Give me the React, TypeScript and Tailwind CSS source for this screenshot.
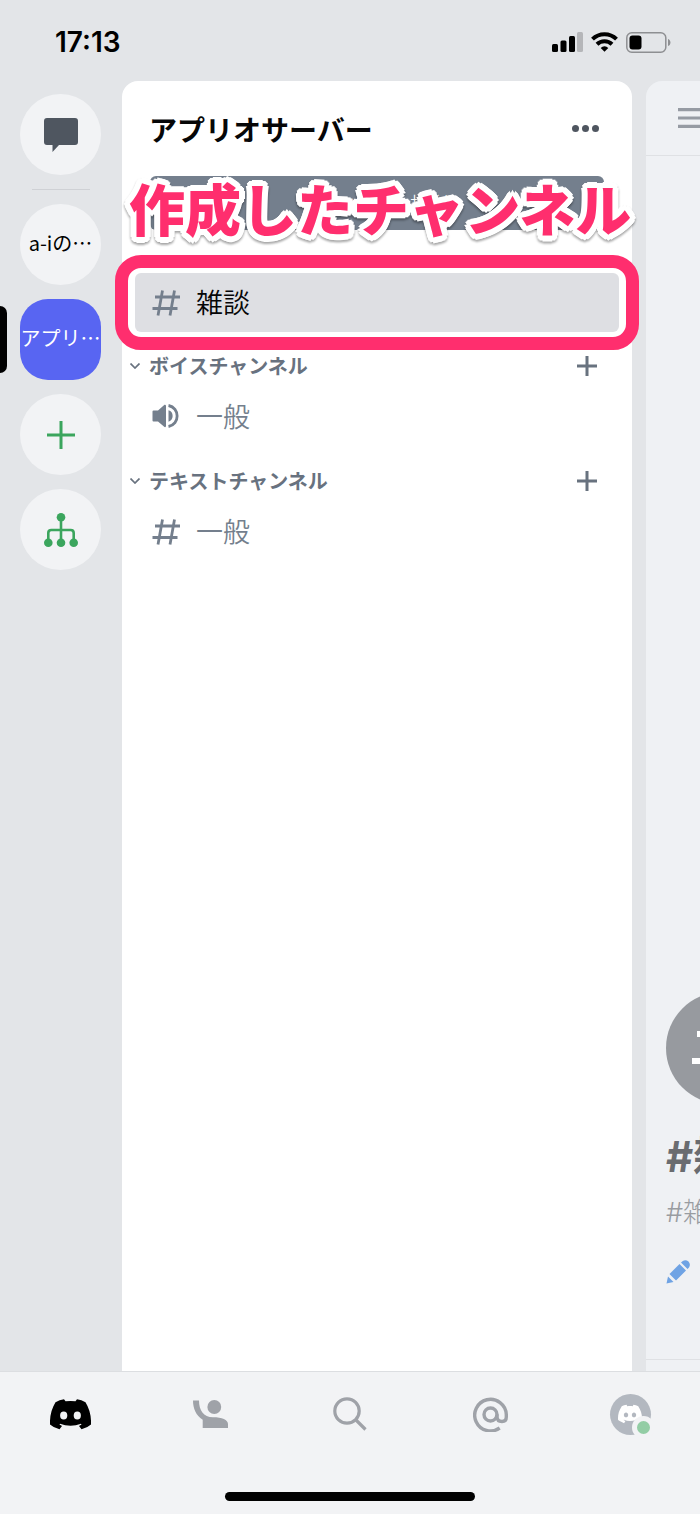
import type { ReactNode } from "react";
import { SiDiscord } from "react-icons/si";

function HashIcon({ className }: { className: string }) {
  return (
    <svg viewBox="0 0 28 26" fill="none" stroke="currentColor" strokeWidth="2.8" className={className} aria-hidden="true">
      <path d="M10.5 0.5 6 25.5M22.5 0.5 18 25.5M3 7H28M0.5 18.5H25.5" />
    </svg>
  );
}

function PlusIcon({ className }: { className: string }) {
  return (
    <svg viewBox="0 0 20 20" fill="none" stroke="currentColor" strokeWidth="3" className={className} aria-hidden="true">
      <path d="M10 0V20M0 10H20" />
    </svg>
  );
}

function SpeakerIcon({ className }: { className: string }) {
  return (
    <svg viewBox="0 0 28 26" fill="currentColor" className={className} aria-hidden="true">
      <path d="M12.500 0.800Q14 0.500 14 2V22Q14 23.500 12.500 23L6 17.500H1.500Q0.500 17.500 0.500 16.500V7.500Q0.500 6.500 1.500 6.500H6Z" />
      <path d="M16.500 6.300C22 7.500 22 16.500 16.500 17.700Z" />
      <path d="M16.500 1.500C28 3.500 28 20.500 16.500 22.500" fill="none" stroke="currentColor" strokeWidth="2.800" />
    </svg>
  );
}

function StatusBar() {
  return (
    <header className="flex h-[81px] items-start justify-between pl-[55px] pr-[29px] pt-[26px]">
      <time className="font-[Inter] text-[28px] font-semibold leading-8 text-black">17:13</time>
      <div className="flex h-8 items-center gap-[8px]">
        <svg viewBox="0 0 31 20" className="h-5 w-[31px]" aria-hidden="true">
          <rect x="0" y="12" width="6" height="8" rx="1.5" />
          <rect x="8.5" y="8.500" width="6" height="11.5" rx="1.5" />
          <rect x="17" y="4" width="6" height="16" rx="1.5" />
          <rect x="25" y="0" width="6" height="20" rx="1.5" fill="#b5b6b9" />
        </svg>
        <svg viewBox="0 0 27 20" className="h-5 w-[27px]" fill="none" stroke="#000" strokeWidth="4" aria-hidden="true">
          <path d="M1.500 7.200A17 17 0 0 1 25.500 7.200" />
          <path d="M6 12.200A10.700 10.700 0 0 1 21 12.200" />
          <path d="M9.700 15.900A5.400 5.400 0 0 1 17.300 15.900L13.500 19.800Z" fill="#000" stroke="none" />
        </svg>
        <svg viewBox="0 0 45 21" className="h-[21px] w-[45px]" aria-hidden="true">
          <rect x="0.800" y="0.800" width="39" height="19.400" rx="5" fill="none" stroke="#8e8f92" strokeWidth="1.500" />
          <rect x="3.500" y="3.500" width="12" height="14" rx="3" />
          <path d="M42 7c3.300 1 3.300 6 0 7z" fill="#8e8f92" />
        </svg>
      </div>
    </header>
  );
}

function ServerRail() {
  const bubble = "flex size-[81px] shrink-0 items-center justify-center overflow-hidden whitespace-nowrap";
  return (
    <nav aria-label="サーバー" className="flex w-[122px] shrink-0 flex-col items-center gap-[14px] pt-[13px] pr-px">
      <button aria-label="ダイレクトメッセージ" className={`${bubble} rounded-full bg-[#f2f3f5] text-[#4f5660]`}>
        <svg viewBox="0 0 34 34" className="size-[34px]" fill="currentColor" aria-hidden="true">
          <path d="M3 0H31Q34 0 34 3V24Q34 27 31 27H15L8.500 34V27H3Q0 27 0 24V3Q0 0 3 0Z" />
        </svg>
      </button>
      <hr className="w-[58px] border-t border-[#cfd1d5]" />
      <button className={`${bubble} rounded-full bg-[#f2f3f5] pb-1 text-[20px] text-black`}>a-iの⋯</button>
      <div className="relative flex w-full justify-center">
        <span className="absolute left-0 top-[7px] h-[67px] w-[7px] rounded-r-lg bg-black" />
        <button aria-current="true" className={`${bubble} rounded-[28px] bg-[#5865f2] pb-1 text-[20px] text-white`}>
          アプリ⋯
        </button>
      </div>
      <button aria-label="サーバーを追加" className={`${bubble} rounded-full bg-[#f2f3f5] text-[#3ba55d]`}>
        <svg viewBox="0 0 28 28" className="size-7" stroke="currentColor" strokeWidth="3" aria-hidden="true">
          <path d="M14 0V28M0 14H28" />
        </svg>
      </button>
      <button aria-label="学生ハブ" className={`${bubble} rounded-full bg-[#f2f3f5] text-[#3ba55d]`}>
        <svg viewBox="0 0 34 34" className="size-[34px]" fill="currentColor" aria-hidden="true">
          <path
            d="M17 4V30M4.300 30V20Q4.300 17 7.300 17H26.700Q29.700 17 29.700 20V30"
            fill="none"
            stroke="currentColor"
            strokeWidth="2.600"
          />
          <circle cx="17" cy="4.300" r="4.300" />
          <circle cx="4.300" cy="29.700" r="4.300" />
          <circle cx="17" cy="29.700" r="4.300" />
          <circle cx="29.700" cy="29.700" r="4.300" />
        </svg>
      </button>
    </nav>
  );
}

function Category({ title, children }: { title: string; children: ReactNode }) {
  return (
    <section>
      <div className="flex h-8 items-center pl-2 pr-[35px] text-[#68727f]">
        <svg viewBox="0 0 10 6" className="mr-[9px] h-[6px] w-[10px]" fill="none" stroke="currentColor" strokeWidth="1.700" aria-hidden="true">
          <path d="M0.500 0.500 5 5 9.500 0.500" />
        </svg>
        <h2 className="flex-1 text-[20px] font-bold leading-8">{title}</h2>
        <button aria-label={`${title}を追加`}>
          <PlusIcon className="size-5" />
        </button>
      </div>
      {children}
    </section>
  );
}

function Channel({ icon, name }: { icon: ReactNode; name: string }) {
  return (
    <a href="#general" className="flex h-[69px] items-center pl-[30px] text-[27px] font-[350] text-[#747f8d]">
      <span className="mr-4 flex w-7 shrink-0">{icon}</span>
      {name}
    </a>
  );
}

function ChannelPanel() {
  return (
    <main className="min-w-0 flex-1 rounded-t-2xl bg-white">
      <div className="flex h-[95px] items-center justify-between pl-[27px] pr-[33px]">
        <h1 className="text-[28px] font-bold leading-10 text-[#060607]">アプリオサーバー</h1>
        <button aria-label="その他" className="flex gap-[3px]">
          <span className="size-[7px] rounded-full bg-[#4f5660]" />
          <span className="size-[7px] rounded-full bg-[#4f5660]" />
          <span className="size-[7px] rounded-full bg-[#4f5660]" />
        </button>
      </div>
      <div className="relative px-7">
        <button className="h-[54px] w-full rounded-md bg-[#747f8d] text-[22px] font-light text-white">メンバーを招待</button>
        <p className="absolute inset-x-0 -top-[3px] whitespace-nowrap pl-[7px] text-[56px] font-black leading-[68px] text-[#ff2e6e] [filter:drop-shadow(0_2px_1px_rgb(0_0_0/0.35))] [text-shadow:6px_0_#fff,5px_3px_#fff,4px_4px_#fff,3px_5px_#fff,0_6px_#fff,-3px_5px_#fff,-4px_4px_#fff,-5px_3px_#fff,-6px_0_#fff,-5px_-3px_#fff,-4px_-4px_#fff,-3px_-5px_#fff,0_-6px_#fff,3px_-5px_#fff,4px_-4px_#fff,5px_-3px_#fff,3px_0_#fff,-3px_0_#fff,0_3px_#fff,0_-3px_#fff]">
          作成したチャンネル
        </p>
      </div>
      <div className="relative -mx-[7px] mt-[25px] rounded-[26px] border-[13px] border-[#ff2e6e] px-[7px] py-[5px]">
        <a href="#chat" className="flex h-[59px] items-center rounded-md bg-[#dedfe3] pl-[17px] text-[27px] font-[350] text-[#060607]">
          <HashIcon className="mr-4 h-[26px] w-7 text-[#747f8d]" />
          雑談
        </a>
      </div>
      <Category title="ボイスチャンネル">
        <Channel icon={<SpeakerIcon className="h-[26px] w-7" />} name="一般" />
      </Category>
      <div className="pt-[14px]">
        <Category title="テキストチャンネル">
          <Channel icon={<HashIcon className="h-[26px] w-7" />} name="一般" />
        </Category>
      </div>
    </main>
  );
}

function ChatPeek() {
  return (
    <aside className="ml-[14px] flex w-[54px] shrink-0 flex-col overflow-hidden whitespace-nowrap rounded-tl-2xl bg-[#eff1f4]">
      <div className="flex h-[75px] items-center border-b border-[#dfe1e4] pl-8">
        <svg viewBox="0 0 30 20" className="h-5 w-[30px] shrink-0" stroke="#969ba3" strokeWidth="3.200" aria-hidden="true">
          <path d="M0 1.600H30M0 10H30M0 18.400H30" />
        </svg>
      </div>
      <div className="mt-auto flex flex-col items-start pl-5">
        <div className="flex size-[112px] shrink-0 items-center justify-center rounded-full bg-[#979a9f] text-white">
          <svg viewBox="0 0 60 56" className="h-14 w-[60px]" fill="none" stroke="currentColor" strokeWidth="6" aria-hidden="true">
            <path d="M24 0 14 56M50 0 40 56M5 14H60M0 41H55" />
          </svg>
        </div>
        <h2 className="mt-[27px] font-[Inter,'Noto_Sans_CJK_JP',sans-serif] text-[42px] font-bold leading-[52px] text-[#6a6c70]">#雑談</h2>
        <p className="mt-[10px] font-[Inter,'Noto_Sans_CJK_JP',sans-serif] text-[27px] font-light leading-10 text-[#999ca1]">#雑談の始まりです。</p>
        <button aria-label="チャンネルを編集" className="mt-[27px] text-[#6fa3e4]">
          <svg viewBox="0 0 24 24" className="size-6" fill="currentColor" aria-hidden="true">
            <path d="M0.500 23.500 2 16.500 7.500 22ZM3.500 14 13.500 4 20 10.500 10 20.500ZM15 2.500 16.500 1.300Q19.500 -0.800 22.500 1.500 25 4.500 23 7.500L21.500 9Z" />
          </svg>
        </button>
      </div>
      <div className="mt-[75px] h-3 shrink-0 border-t border-[#dfe1e4]" />
    </aside>
  );
}

function TabBar() {
  const tab = "flex w-[140px] shrink items-center justify-center";
  return (
    <footer className="flex h-[143px] shrink-0 flex-col items-center border-t border-[#dcdee1] bg-[#f2f3f5]">
      <nav aria-label="メイン" className="flex h-[84px] w-full items-center justify-between text-[#9fa2a8]">
        <button aria-label="ホーム" className={tab}>
          <svg viewBox="0 0 41 31" className="h-[31px] w-[41px] text-black" fill="currentColor" aria-hidden="true">
            <path
              fillRule="evenodd"
              d="M14 0.300 15.500 2.300Q20.500 1.600 25.500 2.300L27 0.300Q31.500 0.800 35.500 3.300Q41.500 13 41 25.500Q37.500 28.800 31.500 30.200L29 27 31.500 25.500 31 24.800Q20.500 28.500 10 24.800L9.500 25.500 12 27 9.500 30.200Q3.500 28.800 0 25.500Q-0.500 13 5.500 3.300Q9.500 0.800 14 0.300ZM13.700 12.500A3.600 4 0 1 0 13.700 20.500 3.600 4 0 1 0 13.700 12.500ZM27.300 12.500A3.600 4 0 1 0 27.300 20.500 3.600 4 0 1 0 27.300 12.500Z"
            />
          </svg>
        </button>
        <button aria-label="フレンド" className={tab}>
          <svg viewBox="0 0 35 28" className="h-7 w-[35px]" fill="currentColor" aria-hidden="true">
            <circle cx="21.300" cy="7" r="6.900" />
            <path d="M0 0.500H6C6 10 10.500 17.300 20 17.300 29 17.300 35 20 35 24V28H9.700V19.700C3 15.500 0 8.500 0 0.500Z" />
          </svg>
        </button>
        <button aria-label="検索" className={tab}>
          <svg viewBox="0 0 34 34" className="size-[34px]" fill="none" stroke="currentColor" strokeWidth="3.200" aria-hidden="true">
            <circle cx="14" cy="14" r="12.200" />
            <path d="M22.500 22.500 32.500 32.500" />
          </svg>
        </button>
        <button aria-label="メンション" className={tab}>
          <svg viewBox="0 0 35 35" className="size-[35px]" fill="none" stroke="currentColor" strokeWidth="3.400" aria-hidden="true">
            <circle cx="17.500" cy="17.500" r="6.500" />
            <path d="M26.700 31A15.800 15.800 0 1 1 33.300 17.500V20Q33.300 24.500 29 24.500 24 24.500 24 19.500V17.500" />
          </svg>
        </button>
        <button aria-label="プロフィール" className={tab}>
          <span className="relative flex size-[41px] items-center justify-center rounded-full bg-[#b3b8c0]">
            <SiDiscord className="size-6 text-white" />
            <span className="absolute -bottom-1 -right-1 size-[23px] rounded-full border-[5px] border-[#f2f3f5] bg-[#93cda5]" />
          </span>
        </button>
      </nav>
      <div className="mt-[36px] h-[9px] w-[250px] rounded-full bg-black" />
    </footer>
  );
}

export default function App() {
  return (
    <div className="flex min-h-screen flex-col overflow-hidden bg-[#e3e5e8] font-['Noto_Sans_CJK_JP',sans-serif]">
      <StatusBar />
      <div className="flex flex-1">
        <ServerRail />
        <ChannelPanel />
        <ChatPeek />
      </div>
      <TabBar />
    </div>
  );
}
